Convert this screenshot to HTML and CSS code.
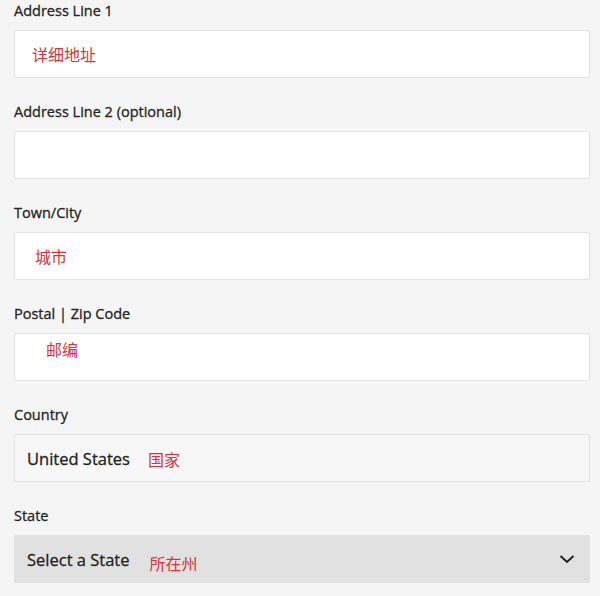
FILE: index.html
```html
<!DOCTYPE html>
<html lang="en">
<head>
    <meta charset="UTF-8">
    <meta name="viewport" content="width=device-width, initial-scale=1.0">
    <title>Address Form</title>
    <link rel="stylesheet" href="styles.css">
</head>
<body>
    <form class="address-form">
        <div class="field">
            <label>Address Line 1</label>
            <div class="box">
                <span class="note note-line1">详细地址</span>
            </div>
        </div>

        <div class="field">
            <label>Address Line 2 (optional)</label>
            <div class="box"></div>
        </div>

        <div class="field">
            <label>Town/City</label>
            <div class="box">
                <span class="note note-city">城市</span>
            </div>
        </div>

        <div class="field">
            <label>Postal | Zip Code</label>
            <div class="box">
                <span class="note note-zip">邮编</span>
            </div>
        </div>

        <div class="field">
            <label>Country</label>
            <div class="box box-readonly">
                <span class="value">United States</span>
                <span class="note note-country">国家</span>
            </div>
        </div>

        <div class="field">
            <label>State</label>
            <div class="box box-select">
                <span class="value">Select a State</span>
                <span class="note note-state">所在州</span>
                <svg class="chevron" width="16" height="10" viewBox="0 0 16 10">
                    <path d="M1.5 2 L8 8 L14.5 2" fill="none" stroke="#222" stroke-width="2"/>
                </svg>
            </div>
        </div>
    </form>
</body>
</html>
```

FILE: styles.css
```css
body {
    margin: 0;
    background: #f5f5f5;
    font-family: "Open Sans", "Noto Sans", sans-serif;
    color: #222;
}

.address-form {
    padding: 1px 10px 0 14px;
    display: flex;
    flex-direction: column;
    gap: 24px;
}

.field label {
    display: block;
    font-size: 14.5px;
    line-height: 20px;
    margin-bottom: 9px;
    color: #252525;
    -webkit-text-stroke: 0.3px #252525;
}

.box {
    height: 48px;
    box-sizing: border-box;
    background: #fff;
    border: 1px solid #e2e2e2;
    border-radius: 2px;
    display: flex;
    align-items: center;
}

.box-readonly {
    background: #f7f7f7;
    padding-left: 12px;
}

.box-select {
    background: #e1e1e1;
    border-color: #e1e1e1;
    padding-left: 12px;
    padding-right: 14px;
}

.value {
    font-size: 16.5px;
    color: #222;
    -webkit-text-stroke: 0.3px #222;
}

.note {
    font-family: "Noto Sans CJK SC", sans-serif;
    font-size: 16px;
    color: #d1363d;
}

.note-line1 { margin-left: 17px; }
.note-city { margin-left: 20px; }
.note-zip { margin-left: 31px; margin-top: -16px; }
.note-country { margin-left: 18px; margin-top: 2px; }
.note-state { margin-left: 20px; margin-top: 8px; }

.chevron {
    margin-left: auto;
}
```
